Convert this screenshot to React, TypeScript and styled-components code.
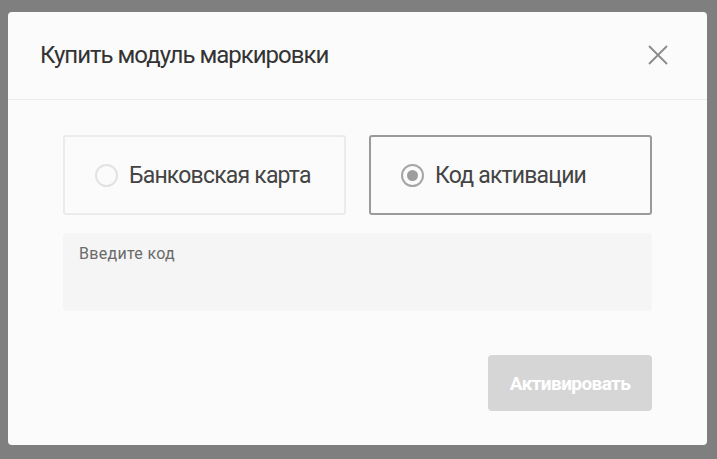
import styled, { createGlobalStyle } from 'styled-components';
import { useState } from 'react';

const GlobalStyle = createGlobalStyle`
	html, body {
		margin: 0;
		padding: 0;
		background: #7f7f7f;
		font-family: Roboto, 'Liberation Sans', Arial, sans-serif;
	}
	* {
		box-sizing: border-box;
	}
`;

const Overlay = styled.div`
	width: 717px;
	height: 459px;
	padding: 12px 10px 14px 8px;
	background: #7f7f7f;
`;

const Modal = styled.div`
	width: 699px;
	height: 433px;
	background: #fbfbfb;
	border-radius: 4px;
	display: flex;
	flex-direction: column;
`;

const Header = styled.header`
	height: 88px;
	padding: 0 38px 2px 32px;
	display: flex;
	align-items: center;
	justify-content: space-between;
	border-bottom: 1px solid #ececec;
`;

const Title = styled.h2`
	margin: 0;
	font-size: 24px;
	font-weight: 400;
	color: #333333;
	letter-spacing: -1px;
`;

const CloseButton = styled.button`
	width: 22px;
	height: 22px;
	padding: 0;
	border: none;
	background: none;
	cursor: pointer;
	display: flex;
	align-items: center;
	justify-content: center;
`;

const Body = styled.div`
	flex: 1;
	padding: 35px 55px 34px;
	display: flex;
	flex-direction: column;
`;

const Options = styled.div`
	display: grid;
	grid-template-columns: 1fr 1fr;
	gap: 23px;
`;

const Option = styled.label<{ $active: boolean }>`
	height: 80px;
	border: 2px solid ${(p) => (p.$active ? '#9a9a9a' : '#ebebeb')};
	border-radius: 3px;
	display: flex;
	align-items: center;
	padding-left: 30px;
	gap: 11px;
	cursor: pointer;
	font-size: 23px;
	letter-spacing: -0.8px;
	color: #444444;
`;

const Radio = styled.span<{ $active: boolean }>`
	flex: none;
	width: 23px;
	height: 23px;
	border-radius: 50%;
	border: 2px solid ${(p) => (p.$active ? '#a6a6a6' : '#e2e2e2')};
	display: flex;
	align-items: center;
	justify-content: center;

	&::after {
		content: '';
		width: 11px;
		height: 11px;
		border-radius: 50%;
		background: ${(p) => (p.$active ? '#9d9d9d' : 'transparent')};
	}
`;

const CodeField = styled.div`
	margin-top: 18px;
	height: 78px;
	background: #f5f5f5;
	border-radius: 4px;
	padding: 11px 16px;
`;

const FieldLabel = styled.div`
	font-size: 16px;
	letter-spacing: 0.3px;
	color: #6a6a6a;
`;

const Footer = styled.div`
	margin-top: auto;
	display: flex;
	justify-content: flex-end;
`;

const SubmitButton = styled.button`
	width: 164px;
	height: 56px;
	border: none;
	border-radius: 4px;
	background: #d6d6d6;
	color: #ffffff;
	font-family: Roboto, 'Liberation Sans', Arial, sans-serif;
	font-size: 19px;
	font-weight: 700;
	letter-spacing: -0.6px;
`;

const App = () => {
	const [method, setMethod] = useState<'card' | 'code'>('code');

	return (
		<>
			<GlobalStyle />
			<Overlay>
				<Modal>
					<Header>
						<Title>Купить модуль маркировки</Title>
						<CloseButton aria-label="Закрыть">
							<svg width="20" height="20" viewBox="0 0 20 20">
								<path d="M1 1 L19 19 M19 1 L1 19" stroke="#8a8a8a" strokeWidth="1.8" />
							</svg>
						</CloseButton>
					</Header>
					<Body>
						<Options>
							<Option $active={method === 'card'} onClick={() => setMethod('card')}>
								<Radio $active={method === 'card'} />
								Банковская карта
							</Option>
							<Option $active={method === 'code'} onClick={() => setMethod('code')}>
								<Radio $active={method === 'code'} />
								Код активации
							</Option>
						</Options>
						<CodeField>
							<FieldLabel>Введите код</FieldLabel>
						</CodeField>
						<Footer>
							<SubmitButton disabled>Активировать</SubmitButton>
						</Footer>
					</Body>
				</Modal>
			</Overlay>
		</>
	);
};

export default App;
